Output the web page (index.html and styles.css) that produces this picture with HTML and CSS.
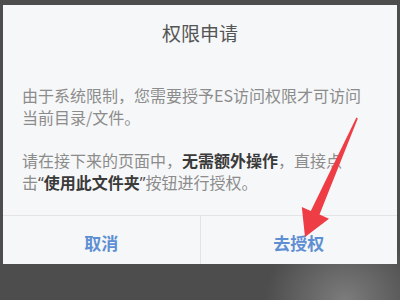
FILE: index.html
```html
<!DOCTYPE html>
<html lang="zh-CN">
<head>
    <meta charset="UTF-8">
    <meta name="viewport" content="width=device-width, initial-scale=1.0">
    <title>权限申请</title>
    <link rel="stylesheet" href="styles.css">
</head>
<body>
<div class="dialog">
    <div class="dialog_title">权限申请</div>
    <div class="dialog_body">
        <p>由于系统限制，您需要授予ES访问权限才可访问<br>当前目录/文件。</p>
        <p>请在接下来的页面中，<b>无需额外操作</b>，直接点<br>击<span class="q">“</span><b>使用此文件夹</b><span class="q">”</span>按钮进行授权。</p>
    </div>
    <div class="dialog_btns">
        <a href="javascript:;">取消</a>
        <a href="javascript:;">去授权</a>
    </div>
</div>
<!-- 红色箭头标注 -->
<svg class="arrow" width="400" height="300" viewBox="0 0 400 300">
    <polygon fill="#ef3d45" points="356.4,117.4 357.8,118.6 319.5,214.4 329,218.8 305,237 301.8,207 310.8,211"/>
</svg>
</body>
</html>
```

FILE: styles.css
```css
* {
    margin: 0;
    padding: 0;
}

body {
    width: 400px;
    height: 300px;
    overflow: hidden;
    position: relative;
    background: radial-gradient(ellipse 80px 70px at 345px 300px, #7c7c7c, #4c4d4c);
    font-family: "Noto Sans CJK SC", sans-serif;
}

.dialog {
    width: 394px;
    height: 259px;
    margin: 5px 0 0 3px;
    background: #f6f7f8;
    display: flex;
    flex-direction: column;
}

.dialog_title {
    padding-top: 16px;
    line-height: 24px;
    font-size: 19px;
    color: #555;
    text-align: center;
}

.dialog_body {
    padding: 39px 8px 21px 19px;
    font-size: 16px;
    line-height: 22px;
    color: #8c8c8c;
    border-bottom: 1px solid #e4e4e6;
}

.dialog_body p + p {
    margin-top: 21px;
}

.dialog_body b {
    color: #3a3a3a;
}

.dialog_body .q {
    font-family: "Noto Sans", sans-serif;
    color: #555;
}

.dialog_btns {
    flex: 1;
    display: flex;
}

.dialog_btns a {
    flex: 1;
    display: flex;
    align-items: center;
    justify-content: center;
    padding-top: 5px;
    font-size: 17px;
    font-weight: bold;
    color: #5e8fd3;
    text-decoration: none;
}

.dialog_btns a + a {
    border-left: 1px solid #e4e4e6;
}

.arrow {
    position: absolute;
    left: 0;
    top: 0;
}
```
